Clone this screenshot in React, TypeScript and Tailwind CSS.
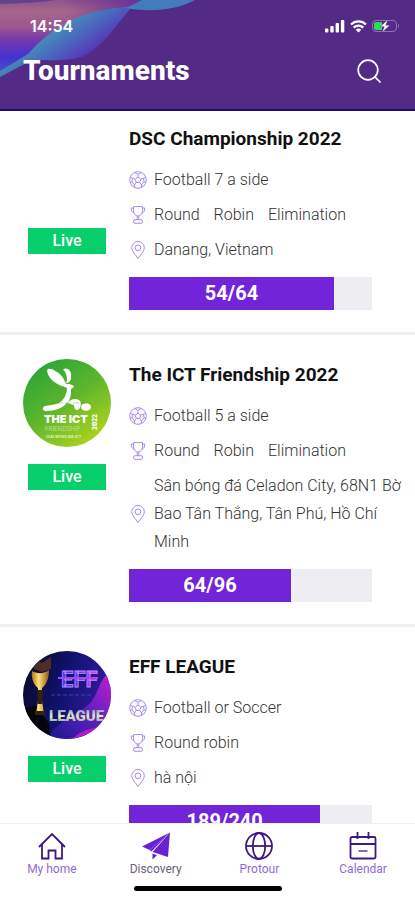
import type { ReactNode } from 'react';

type Tournament = {
  name: string;
  sport: string;
  format: string[];
  place: string;
  joined: number;
  total: number;
  logo?: ReactNode;
};

function BallIcon() {
  return (
    <svg viewBox="0 0 18 18" className="h-[18px] w-[18px]" fill="none" stroke="#a78bea" strokeWidth="1" strokeLinejoin="round" aria-hidden="true">
      <circle cx="9" cy="9" r="8.3" />
      <path d="M9 6.2l2.8 2-1.1 3.3H7.3L6.2 8.2z" />
      <path d="M9 6.2V3.4M11.8 8.2l2.8-1M10.7 11.5l1.8 2.5M7.3 11.5L5.5 14M6.2 8.2l-2.8-1" />
      <path d="M5.6 1.5L9 3.4l3.4-1.9M16.8 6l-2.2 1.2.4 3.6 1.8.8M15 10.8L12.5 14l-.3 2.4M5.8 16.4L5.5 14 3 10.8l-1.8.8M3 10.8l.4-3.6L1.2 6" />
    </svg>
  );
}

function TrophyIcon() {
  return (
    <svg viewBox="0 0 18 18" className="h-[18px] w-[18px]" fill="none" stroke="#a78bea" strokeWidth="1" strokeLinejoin="round" aria-hidden="true">
      <path d="M4.5.6h9v4.2c0 3-2 5.2-4.5 5.2S4.5 7.8 4.5 4.8z" />
      <path d="M4.5 2H2.3c0 3 .9 4.6 2.8 5M13.5 2h2.2c0 3-.9 4.6-2.8 5M8.2 10v3.7M9.8 10v3.7" />
      <rect x="4.5" y="13.7" width="9" height="3.6" rx="1.5" />
    </svg>
  );
}

function PinIcon() {
  return (
    <svg viewBox="0 0 18 18" className="h-[18px] w-[18px]" fill="none" stroke="#a78bea" strokeWidth="1" strokeLinejoin="round" aria-hidden="true">
      <path d="M9 17.4C6.5 13.8 2.7 10.3 2.7 6.8a6.3 6.3 0 0 1 12.6 0c0 3.5-3.8 7-6.3 10.6z" />
      <circle cx="9" cy="6.8" r="2.8" />
    </svg>
  );
}

function IctLogo() {
  return (
    <svg viewBox="0 0 88 88" className="h-[88px] w-[88px] rounded-full" role="img" aria-label="The ICT Friendship">
      <defs>
        <linearGradient id="ict" x1="0.1" y1="0" x2="0.8" y2="1">
          <stop offset="0" stopColor="#22a338" />
          <stop offset="0.5" stopColor="#5db52c" />
          <stop offset="1" stopColor="#b5d51d" />
        </linearGradient>
      </defs>
      <rect width="88" height="88" fill="url(#ict)" />
      <path d="M25 10c-2 1 0 7 4 11 5 5 11 6 15 8 0 6-3 12-8 15-5 2-10 2-14 3-3 1-3 5 1 5 9 0 17-3 22-9 3-4 3-9 3-13l3-2c-1-3-5-3-8-3-2-5-4-9-9-12-4-3-7-4-9-3z" fill="#fff" />
      <path d="M40 10c5-2 9 2 8 8 0 4-2 6-5 6 2-4 1-9-3-14z" fill="#fff" />
      <path d="M44 44c4-4 8-5 12-3 3 2 2 8-1 10-3 0-4-2-4-5-3-1-5-1-7-2z" fill="#fff" />
      <ellipse cx="63" cy="48" rx="5" ry="3.8" fill="#fff" />
      <path d="M18 44h50" stroke="#3b8a3d" strokeWidth="1" strokeDasharray="6 2" opacity="0.35" />
      <text x="21" y="64" fontSize="11" fontWeight="900" fill="#fff" fontFamily="Inter, sans-serif">THE ICT</text>
      <text x="22" y="72" fontSize="6" fill="#b9df9a" fontFamily="Inter, sans-serif">FRIENDSHIP</text>
      <text x="23" y="79" fontSize="4" fontWeight="700" fill="#dff0bf" fontFamily="Inter, sans-serif">GIẢI BÓNG ĐÁ ICT</text>
      <text transform="translate(74 71) rotate(-90)" fontSize="6" fontWeight="900" fill="#fff" fontFamily="Inter, sans-serif">2022</text>
    </svg>
  );
}

function EffLogo() {
  return (
    <svg viewBox="0 0 88 88" className="h-[88px] w-[88px] rounded-full" role="img" aria-label="EFF League">
      <defs>
        <linearGradient id="effBg" x1="0" y1="0" x2="1" y2="0.3">
          <stop offset="0" stopColor="#080824" />
          <stop offset="0.55" stopColor="#11126f" />
          <stop offset="1" stopColor="#351aa0" />
        </linearGradient>
        <linearGradient id="effGlow" x1="0" y1="1" x2="1" y2="0">
          <stop offset="0" stopColor="#1c1790" />
          <stop offset="0.5" stopColor="#5a20bd" />
          <stop offset="1" stopColor="#c51fcf" />
        </linearGradient>
        <linearGradient id="effText" x1="0" x2="1">
          <stop offset="0" stopColor="#2d35ff" />
          <stop offset="0.6" stopColor="#7b3cff" />
          <stop offset="1" stopColor="#e63df0" />
        </linearGradient>
        <linearGradient id="effLeague" x1="0" y1="0" x2="0" y2="1">
          <stop offset="0" stopColor="#5f8ac8" />
          <stop offset="0.5" stopColor="#e9eab4" />
          <stop offset="1" stopColor="#7195b5" />
        </linearGradient>
        <linearGradient id="effCup" x1="0" x2="1">
          <stop offset="0" stopColor="#b87510" />
          <stop offset="0.4" stopColor="#ffe27a" />
          <stop offset="1" stopColor="#94570c" />
        </linearGradient>
      </defs>
      <rect width="88" height="88" fill="url(#effBg)" />
      <path d="M88 20c-13 8-12 25-23 34-8 8-25 14-37 27v7h60z" fill="url(#effGlow)" />
      <path d="M50 88c5-8 18-11 32-13l-6 13z" fill="#b31dc8" />
      <path d="M0 58l12-4 14 18 1 16H0z" fill="#05050d" />
      <path d="M11 8l8 4 9-6v12l-9 3-8-3z" fill="#4e2d24" />
      <path d="M9 20c5 3 12 3 17-1 0 9-3 15-7 18v12l2 14h-8l2-14V37c-4-3-7-9-6-17z" fill="url(#effCup)" />
      <path d="M14.5 39h5v14h-5zM12 60h10v4H12z" fill="#33220c" />
      <path d="M28 44h40" stroke="#3c42b8" strokeWidth="1" strokeDasharray="4 2" />
      <text x="38" y="36" fontSize="22" fontWeight="700" fill="url(#effText)" stroke="#b989ff" strokeWidth="0.8" fontFamily="Roboto, sans-serif">EFF</text>
      <path d="M35 27h40" stroke="#a34af5" strokeWidth="1.8" />
      <text x="26" y="70" fontSize="15" fontWeight="900" fill="url(#effLeague)" fontFamily="Roboto, sans-serif">LEAGUE</text>
    </svg>
  );
}

const tournaments: Tournament[] = [
  { name: 'DSC Championship 2022', sport: 'Football 7 a side', format: ['Round', 'Robin', 'Elimination'], place: 'Danang, Vietnam', joined: 54, total: 64 },
  { name: 'The ICT Friendship 2022', sport: 'Football 5 a side', format: ['Round', 'Robin', 'Elimination'], place: 'Sân bóng đá Celadon City, 68N1 Bờ Bao Tân Thắng, Tân Phú, Hồ Chí Minh', joined: 64, total: 96, logo: <IctLogo /> },
  { name: 'EFF LEAGUE', sport: 'Football or Soccer', format: ['Round robin'], place: 'hà nội', joined: 189, total: 240, logo: <EffLogo /> },
];

function InfoRow({ icon, children }: { icon: ReactNode; children: ReactNode }) {
  return (
    <li className="flex items-center gap-[7px]">
      <span className="shrink-0">{icon}</span>
      <span className="flex min-w-0 flex-wrap gap-x-3.5">{children}</span>
    </li>
  );
}

function TournamentCard({ item }: { item: Tournament }) {
  return (
    <article className="flex gap-[18px] border-b-3 border-[#f0f0f2] pt-6 pb-[22px] pl-[23px] first:pt-3">
      <div className="flex shrink-0 flex-col items-center gap-[17px]">
        <div className="h-[88px] w-[88px]">{item.logo}</div>
        <span className="w-[78px] bg-[#07cf6b] text-center text-base leading-[26px] font-medium text-white">Live</span>
      </div>
      <div className="min-w-0 flex-1 pt-0.5">
        <h2 className="text-[19px] leading-7 font-bold text-[#111]">{item.name}</h2>
        <ul className="mt-[13px] flex flex-col gap-[7px] pr-1 text-base leading-7 font-light text-[#333]">
          <InfoRow icon={<BallIcon />}>{item.sport}</InfoRow>
          <InfoRow icon={<TrophyIcon />}>
            {item.format.map((word) => <span key={word}>{word}</span>)}
          </InfoRow>
          <InfoRow icon={<PinIcon />}>{item.place}</InfoRow>
        </ul>
        <div
          role="progressbar"
          aria-label="Teams joined"
          aria-valuenow={item.joined}
          aria-valuemax={item.total}
          className="mt-[13px] mr-[43px] bg-[#eeedf2]"
        >
          <div
            className="bg-[#7224d9] text-center text-xl leading-[33px] font-bold text-white"
            style={{ width: `${(item.joined / item.total) * 100}%` }}
          >
            {item.joined}/{item.total}
          </div>
        </div>
      </div>
    </article>
  );
}

function StatusBar() {
  return (
    <div className="flex items-center justify-between pr-[15px] pl-[30px]">
      <span className="font-[Inter,sans-serif] text-base leading-6 font-semibold">14:54</span>
      <div className="flex items-center gap-[5px]">
        <svg viewBox="0 0 20 13" className="h-[13px] w-5" fill="#fff" aria-hidden="true">
          <rect x="0" y="8.5" width="3.4" height="4" rx="1" />
          <rect x="5.3" y="6" width="3.4" height="6.5" rx="1" />
          <rect x="10.6" y="3" width="3.4" height="9.5" rx="1" />
          <rect x="15.9" y="0" width="3.4" height="12.5" rx="1" />
        </svg>
        <svg viewBox="0 0 17 13" className="h-[13px] w-[17px]" fill="none" stroke="#fff" strokeWidth="2.3" aria-hidden="true">
          <path d="M1 4.5a10.8 10.8 0 0 1 15 0M3.7 7.6a6.9 6.9 0 0 1 9.6 0" />
          <path d="M8.5 12.5L5.8 9.8a3.9 3.9 0 0 1 5.4 0z" fill="#fff" stroke="none" />
        </svg>
        <svg viewBox="0 0 28 14" className="h-3.5 w-7" aria-hidden="true">
          <rect x="0.5" y="1.5" width="24" height="11" rx="3.5" fill="none" stroke="#8c73ab" />
          <path d="M26 5v4c1.3-.4 1.3-3.6 0-4z" fill="#8c73ab" />
          <path d="M4 3h6v8H4c-1.2 0-2-.8-2-2V5c0-1.2.8-2 2-2z" fill="#34d95c" />
          <path d="M16 .5L8 7.8h4.2L10 13.5l8-7.3h-4.2z" fill="#fff" stroke="#542a87" strokeWidth="0.5" />
        </svg>
      </div>
    </div>
  );
}

function HeaderWaves() {
  return (
    <svg viewBox="0 0 200 80" className="absolute top-0 left-0 h-20 w-[200px]" aria-hidden="true">
      <defs>
        <linearGradient id="warm" x1="0" y1="0" x2="0" y2="1">
          <stop offset="0" stopColor="#8d528c" />
          <stop offset="0.15" stopColor="#a7688a" />
          <stop offset="0.38" stopColor="#9d5590" />
          <stop offset="0.55" stopColor="#7537aa" />
          <stop offset="0.8" stopColor="#4532cf" />
          <stop offset="1" stopColor="#4250c4" />
        </linearGradient>
        <linearGradient id="warmFade" x1="0" y1="0" x2="1" y2="0">
          <stop offset="0.45" stopColor="#693097" stopOpacity="0" />
          <stop offset="1" stopColor="#693097" />
        </linearGradient>
        <linearGradient id="cool" gradientUnits="userSpaceOnUse" x1="60" y1="28" x2="84" y2="62">
          <stop offset="0" stopColor="#4689b8" />
          <stop offset="0.4" stopColor="#4a68bf" />
          <stop offset="0.8" stopColor="#5540b8" />
          <stop offset="1" stopColor="#582ca0" />
        </linearGradient>
      </defs>
      <path d="M0 0h142c-5 4-10 6-17 8C90 16 55 28 30 56L0 72z" fill="url(#warm)" />
      <path d="M0 0h142c-5 4-10 6-17 8C90 16 55 28 30 56L0 72z" fill="url(#warmFade)" />
      <path d="M0 0h55C38 3 20 3 0 4z" fill="#63418f" />
      <path d="M131 8c-12 13-23 32-41 45-14 9-36 7-58 7L0 77V71l28-17C48 32 74 11 125 7z" fill="url(#cool)" />
      <path d="M195 0c-17 9-40 13-70 8 6-2 11-5 17-8z" fill="#437bbd" />
    </svg>
  );
}

const tabs = [
  {
    label: 'My home',
    color: 'text-[#9068dc]',
    icon: (
      <path d="M1 15L14 2l13 13M4 12.5V26.5h6.5v-8h7v8H24V12.5" fill="none" stroke="#3d1880" strokeWidth="1.8" />
    ),
  },
  {
    label: 'Discovery',
    color: 'text-[#68617a]',
    icon: (
      <g fill="#6a22d1">
        <path d="M28 .5L0 14.5l7.5 3.5z" />
        <path d="M28 .5L10.5 20 26 25z" />
        <path d="M10.5 21.5v6l4.5-4.2z" />
        <path d="M28 .5L7.5 18l2 1.5z" />
      </g>
    ),
  },
  {
    label: 'Protour',
    color: 'text-[#9068dc]',
    icon: (
      <g fill="none" stroke="#3d1880" strokeWidth="1.8">
        <circle cx="14" cy="14" r="13" />
        <ellipse cx="14" cy="14" rx="6.2" ry="13" />
        <path d="M1 14h26" />
      </g>
    ),
  },
  {
    label: 'Calendar',
    color: 'text-[#9068dc]',
    icon: (
      <g fill="none" stroke="#3d1880" strokeWidth="1.8">
        <rect x="1.5" y="5" width="25" height="21.5" rx="1.5" />
        <path d="M1.5 12h25M8.5 0v7M19.5 0v7" />
        <path d="M9.5 19h9" stroke="#77618f" />
      </g>
    ),
  },
];

export default function App() {
  return (
    <div className="flex h-screen flex-col overflow-hidden bg-white font-[Roboto,'Noto_Sans',sans-serif]">
      <header className="relative shrink-0 border-b-2 border-[#210b72] bg-[#542a87] pt-3.5 pb-[21px] text-white">
        <HeaderWaves />
        <div className="relative flex flex-col gap-4">
          <StatusBar />
          <div className="flex items-center justify-between pr-[34px] pl-[23px]">
            <h1 className="text-[28px] leading-[34px] font-extrabold">Tournaments</h1>
            <button type="button" aria-label="Search">
              <svg viewBox="0 0 24 24" className="h-6 w-6" fill="none" stroke="#fff" strokeWidth="1.7" strokeLinecap="round">
                <circle cx="11" cy="11" r="9.8" />
                <path d="M18 18l5 5" />
              </svg>
            </button>
          </div>
        </div>
      </header>

      <main className="min-h-0 flex-1 overflow-hidden">
        {tournaments.map((item) => <TournamentCard key={item.name} item={item} />)}
      </main>

      <nav className="shrink-0 border-t border-[#f0eff3] bg-white pt-2 pb-[9px]">
        <div className="grid grid-cols-4">
          {tabs.map((tab) => (
            <a key={tab.label} href="#" className={`flex flex-col items-center ${tab.color}`}>
              <svg viewBox="0 0 28 28" className="h-7 w-7" aria-hidden="true">{tab.icon}</svg>
              <span className="text-xs leading-[18px]">{tab.label}</span>
            </a>
          ))}
        </div>
        <div className="mx-auto mt-2 h-[5px] w-[148px] rounded-full bg-black" />
      </nav>
    </div>
  );
}
